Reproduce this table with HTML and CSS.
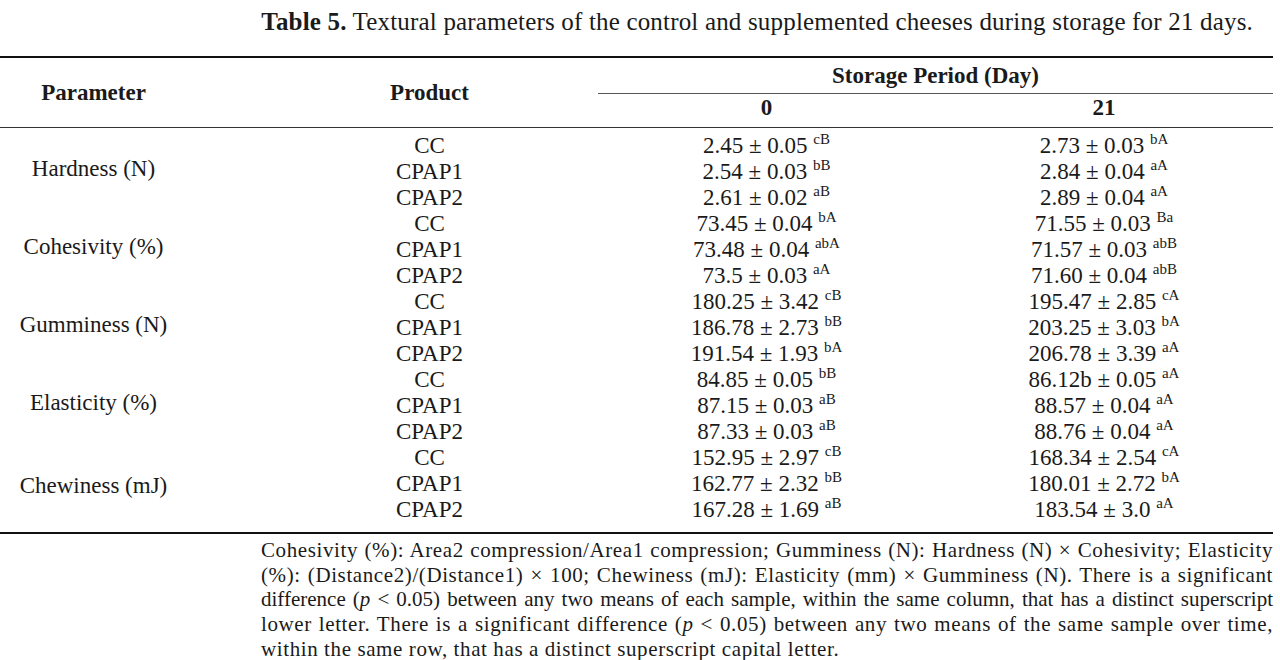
FILE: index.html
```html
<!DOCTYPE html>
<html lang="en">
<head>
<meta charset="utf-8">
<title>Table 5</title>
<link rel="stylesheet" href="styles.css">
</head>
<body>
<div class="page">
  <p class="caption"><b>Table 5.</b> Textural parameters of the control and supplemented cheeses during storage for 21 days.</p>
  <table class="tbl">
    <colgroup>
      <col class="c-param">
      <col class="c-prod">
      <col class="c-day">
      <col class="c-day2">
    </colgroup>
    <thead>
      <tr class="h1">
        <th rowspan="2" class="h-param">Parameter</th>
        <th rowspan="2" class="h-prod">Product</th>
        <th colspan="2" class="h-storage">Storage Period (Day)</th>
      </tr>
      <tr class="h2">
        <th>0</th>
        <th>21</th>
      </tr>
    </thead>
    <tbody>
      <tr class="first">
        <td rowspan="3" class="param">Hardness (N)</td>
        <td class="prod">CC</td><td>2.45 ± 0.05 <sup>cB</sup></td><td>2.73 ± 0.03 <sup>bA</sup></td>
      </tr>
      <tr><td class="prod">CPAP1</td><td>2.54 ± 0.03 <sup>bB</sup></td><td>2.84 ± 0.04 <sup>aA</sup></td></tr>
      <tr><td class="prod">CPAP2</td><td>2.61 ± 0.02 <sup>aB</sup></td><td>2.89 ± 0.04 <sup>aA</sup></td></tr>
      <tr>
        <td rowspan="3" class="param">Cohesivity (%)</td>
        <td class="prod">CC</td><td>73.45 ± 0.04 <sup>bA</sup></td><td>71.55 ± 0.03 <sup>Ba</sup></td>
      </tr>
      <tr><td class="prod">CPAP1</td><td>73.48 ± 0.04 <sup>abA</sup></td><td>71.57 ± 0.03 <sup>abB</sup></td></tr>
      <tr><td class="prod">CPAP2</td><td>73.5 ± 0.03 <sup>aA</sup></td><td>71.60 ± 0.04 <sup>abB</sup></td></tr>
      <tr>
        <td rowspan="3" class="param">Gumminess (N)</td>
        <td class="prod">CC</td><td>180.25 ± 3.42 <sup>cB</sup></td><td>195.47 ± 2.85 <sup>cA</sup></td>
      </tr>
      <tr><td class="prod">CPAP1</td><td>186.78 ± 2.73 <sup>bB</sup></td><td>203.25 ± 3.03 <sup>bA</sup></td></tr>
      <tr><td class="prod">CPAP2</td><td>191.54 ± 1.93 <sup>bA</sup></td><td>206.78 ± 3.39 <sup>aA</sup></td></tr>
      <tr>
        <td rowspan="3" class="param">Elasticity (%)</td>
        <td class="prod">CC</td><td>84.85 ± 0.05 <sup>bB</sup></td><td>86.12b ± 0.05 <sup>aA</sup></td>
      </tr>
      <tr><td class="prod">CPAP1</td><td>87.15 ± 0.03 <sup>aB</sup></td><td>88.57 ± 0.04 <sup>aA</sup></td></tr>
      <tr><td class="prod">CPAP2</td><td>87.33 ± 0.03 <sup>aB</sup></td><td>88.76 ± 0.04 <sup>aA</sup></td></tr>
      <tr>
        <td rowspan="3" class="param">Chewiness (mJ)</td>
        <td class="prod">CC</td><td>152.95 ± 2.97 <sup>cB</sup></td><td>168.34 ± 2.54 <sup>cA</sup></td>
      </tr>
      <tr><td class="prod">CPAP1</td><td>162.77 ± 2.32 <sup>bB</sup></td><td>180.01 ± 2.72 <sup>bA</sup></td></tr>
      <tr class="last"><td class="prod">CPAP2</td><td>167.28 ± 1.69 <sup>aB</sup></td><td>183.54 ± 3.0 <sup>aA</sup></td></tr>
    </tbody>
  </table>
  <div class="notes">
    <span class="line">Cohesivity (%): Area2 compression/Area1 compression; Gumminess (N): Hardness (N) × Cohesivity; Elasticity</span>
    <span class="line">(%): (Distance2)/(Distance1) × 100; Chewiness (mJ): Elasticity (mm) × Gumminess (N). There is a significant</span>
    <span class="line tight">difference (<i>p</i> &lt; 0.05) between any two means of each sample, within the same column, that has a distinct superscript</span>
    <span class="line">lower letter. There is a significant difference (<i>p</i> &lt; 0.05) between any two means of the same sample over time,</span>
    <span class="line end">within the same row, that has a distinct superscript capital letter.</span>
  </div>
</div>
</body>
</html>
```

FILE: styles.css
```css
html, body {
  margin: 0;
  padding: 0;
  background: #ffffff;
}

body {
  font-family: "Liberation Serif", "Times New Roman", serif;
  color: #1a1a1a;
}

.page {
  width: 1280px;
  height: 660px;
  overflow: hidden;
}

.caption {
  margin: 8px 27px 20px 0;
  font-size: 25px;
  line-height: 28px;
  letter-spacing: 0.18px;
  text-align: right;
  white-space: nowrap;
}

.caption b {
  font-weight: bold;
}

.tbl {
  width: 1273px;
  border-collapse: collapse;
  table-layout: fixed;
  border-top: 2px solid #111;
  border-bottom: 2px solid #111;
  font-size: 23px;
}

.c-param { width: 187px; }
.c-prod { width: 411px; }
.c-day { width: 337px; }
.c-day2 { width: 338px; }

.tbl th,
.tbl td {
  padding: 0;
  text-align: center;
  white-space: nowrap;
  font-weight: normal;
}

.tbl th {
  font-weight: bold;
}

.h1 th {
  height: 35px;
}

.h2 th {
  height: 33px;
  line-height: 28px;
  vertical-align: top;
  border-bottom: 1px solid #333;
}

.h-param,
.h-prod {
  border-bottom: 1px solid #333;
  vertical-align: middle;
}

.h-prod,
.prod {
  padding-left: 74px !important;
}

.h-storage {
  border-bottom: 1px solid #555;
}

.tbl td {
  height: 26px;
  line-height: 26px;
}

.tbl td.param {
  vertical-align: middle;
  padding-bottom: 6px;
}

.first td {
  padding-top: 5px;
}

.first td.param {
  padding-top: 5px;
}

.last td {
  padding-bottom: 9px;
}

sup {
  font-size: 15px;
  line-height: 0;
  vertical-align: 9px;
}

.notes {
  margin: 4px 0 0 261px;
  width: 1012px;
  font-size: 21px;
  line-height: 24.7px;
}

.notes .line {
  display: block;
  white-space: nowrap;
  letter-spacing: 0.6px;
  text-align: justify;
  text-align-last: justify;
}

.notes .line.tight {
  letter-spacing: 0;
  word-spacing: -2.5px;
}

.notes .line.end {
  text-align-last: left;
}
```
